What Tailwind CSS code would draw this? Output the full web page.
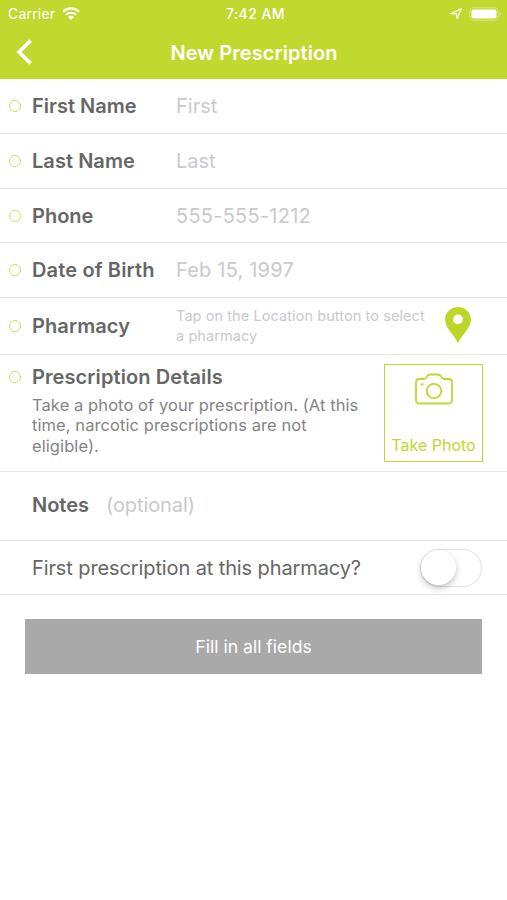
<!DOCTYPE html>
<html lang="en">
<head>
  <meta charset="UTF-8">
  <meta name="viewport" content="width=device-width, initial-scale=1.0">
  <title>New Prescription</title>
  <script src="https://cdn.jsdelivr.net/npm/@tailwindcss/browser@4"></script>
</head>
<body class="h-[900px] overflow-hidden bg-white font-['Inter',sans-serif] text-[#666666]">

  <!-- Status bar and navigation -->
  <header class="h-[79px] bg-[#c1d82f] text-white">
    <div class="grid h-[27px] grid-cols-3 items-center pl-2 pr-[5px] text-[14px]">
      <div class="flex items-center gap-[7px]">
        <span class="tracking-[0.2px]">Carrier</span>
        <svg class="h-[13px] w-[18px]" viewBox="0 0 18 13" fill="none" stroke="currentColor" stroke-width="2.1">
          <path d="M1 4.7a11.4 11.4 0 0 1 16 0M3.9 7.8a7.3 7.3 0 0 1 10.2 0" />
          <path d="M9 13L6 10a4.2 4.2 0 0 1 6 0z" fill="currentColor" stroke="none" />
        </svg>
      </div>
      <span class="pl-px text-center text-[14px] font-medium tracking-[0.45px]">7:42 AM</span>
      <div class="flex items-center justify-end gap-[7px]">
        <svg class="h-3 w-3" viewBox="0 0 12 12" fill="none" stroke="currentColor" stroke-width="1.2" stroke-linejoin="round">
          <path d="M11.2 0.8L7.200 10.6L6.400 5.800L0.900 5.600z" />
        </svg>
        <svg class="h-[14px] w-[33px]" viewBox="0 0 33 14" fill="none">
          <rect x="0.8" y="0.8" width="28.4" height="12.4" rx="3.5" stroke="white" stroke-opacity="0.4" />
          <rect x="2.5" y="2.5" width="25" height="9" rx="2" fill="white" />
          <path d="M30.5 5v4c1.8-.6 1.8-3.4 0-4z" fill="white" fill-opacity="0.4" />
        </svg>
      </div>
    </div>
    <div class="grid h-[52px] grid-cols-[60px_1fr_60px] items-center">
      <svg class="mb-0.5 ml-4 h-[26px] w-4" viewBox="0 0 16 26" fill="none" stroke="currentColor" stroke-width="3.8">
        <path d="M14.7 1.6L3 13l11.7 11.4" />
      </svg>
      <h1 class="pl-px text-center text-[20px] font-semibold tracking-[0.08px]">New Prescription</h1>
    </div>
  </header>

  <main>
    <div class="flex h-[55px] items-center border-b border-[#e7e7e9] pl-[9px]">
      <span class="mr-[11px] size-3 rounded-full border-[1.5px] border-[#cde05c]"></span>
      <label class="w-36 text-[20px] font-semibold">First Name</label>
      <span class="text-[20px] text-[#c9c9ce]">First</span>
    </div>
    <div class="flex h-[55px] items-center border-b border-[#e7e7e9] pl-[9px]">
      <span class="mr-[11px] size-3 rounded-full border-[1.5px] border-[#cde05c]"></span>
      <label class="w-36 text-[20px] font-semibold tracking-[0.05px]">Last Name</label>
      <span class="text-[20px] text-[#c9c9ce]">Last</span>
    </div>
    <div class="flex h-[54px] items-center border-b border-[#e7e7e9] pl-[9px]">
      <span class="mr-[11px] size-3 rounded-full border-[1.5px] border-[#cde05c]"></span>
      <label class="w-36 text-[20px] font-semibold">Phone</label>
      <span class="text-[20px] tracking-[0.25px] text-[#c9c9ce]">555-555-1212</span>
    </div>
    <div class="flex h-[55px] items-center border-b border-[#e7e7e9] pl-[9px]">
      <span class="mr-[11px] size-3 rounded-full border-[1.5px] border-[#cde05c]"></span>
      <label class="w-36 text-[20px] font-semibold tracking-[0.15px]">Date of Birth</label>
      <span class="text-[20px] tracking-[0.2px] text-[#c9c9ce]">Feb 15, 1997</span>
    </div>

    <!-- Pharmacy -->
    <div class="flex h-[57px] items-center border-b border-[#e7e7e9] pl-[9px]">
      <span class="mr-[11px] size-3 rounded-full border-[1.5px] border-[#cde05c]"></span>
      <label class="w-36 text-[20px] font-semibold tracking-[0.1px]">Pharmacy</label>
      <p class="w-[269px] whitespace-nowrap text-[14.5px] leading-[20px] tracking-[0.08px] text-[#c9c9ce]">Tap on the Location button to select<br>a pharmacy</p>
      <svg class="mb-0.5 h-9 w-[26px]" viewBox="0 0 26 36" fill="#bdd62a">
        <path fill-rule="evenodd" d="M13 0C5.800 0 0 5.600 0 12.600C0 20.500 8.500 27.500 13 36C17.500 27.500 26 20.500 26 12.600C26 5.600 20.200 0 13 0ZM13 7.500a4.900 4.900 0 1 1 0 9.800a4.900 4.900 0 0 1 0-9.800z" />
      </svg>
    </div>

    <!-- Prescription details -->
    <div class="flex h-[117px] items-start border-b border-[#e7e7e9] pl-[9px]">
      <span class="mr-[11px] mt-4 size-3 rounded-full border-[1.5px] border-[#cde05c]"></span>
      <div class="w-[352px] pt-[7px]">
        <h2 class="text-[20px] font-semibold leading-[30px] tracking-[0.1px]">Prescription Details</h2>
        <p class="mt-[3px] whitespace-nowrap text-[16.5px] leading-[20.4px] tracking-[0.08px] text-[#848484]">Take a photo of your prescription. (At this<br>time, narcotic prescriptions are not<br>eligible).</p>
      </div>
      <button class="mt-[9px] flex h-[98px] w-[99px] flex-col items-center justify-between border-[1.5px] border-[#c1d82f] pb-1 pt-2 text-[#bfd730]">
        <svg class="h-8 w-[38px]" viewBox="0 0 38 32" fill="none" stroke="currentColor" stroke-width="1.8">
          <path d="M4.500 6H9C10.500 6 11 5 11.700 3.600C12.400 2 13.200 1.500 15 1.500H23C24.800 1.500 25.600 2 26.300 3.600C27 5 27.500 6 29 6H33.500Q37 6 37 9.500V27Q37 30.500 33.500 30.500H4.500Q1 30.500 1 27V9.500Q1 6 4.500 6Z" />
          <circle cx="19" cy="18" r="7.200" />
          <circle cx="7" cy="11.500" r="1.300" fill="currentColor" stroke="none" />
        </svg>
        <span class="whitespace-nowrap text-[16px]">Take Photo</span>
      </button>
    </div>

    <div class="flex h-[69px] items-center border-b border-[#e7e7e9] pb-[3px] pl-8">
      <label class="w-[74px] text-[20px] font-semibold">Notes</label>
      <span class="text-[20px] tracking-[-0.1px] text-[#c9c9ce]">(optional)</span>
    </div>

    <div class="flex h-[54px] items-center justify-between border-b border-[#e7e7e9] pl-8 pr-[25px]">
      <span class="text-[20px] tracking-[-0.11px]">First prescription at this pharmacy?</span>
      <span class="flex h-[38px] w-[62px] items-center rounded-full border-[1.5px] border-[#e2e2e2] bg-white">
        <span class="size-[35px] rounded-full bg-white shadow-[0_3px_6px_rgba(0,0,0,0.24)]"></span>
      </span>
    </div>

    <button class="mx-[25px] mt-[24px] block h-[55px] w-[457px] bg-[#a9a9a9] pt-0.5 text-[17.6px] text-white">Fill in all fields</button>
  </main>
</body>
</html>
